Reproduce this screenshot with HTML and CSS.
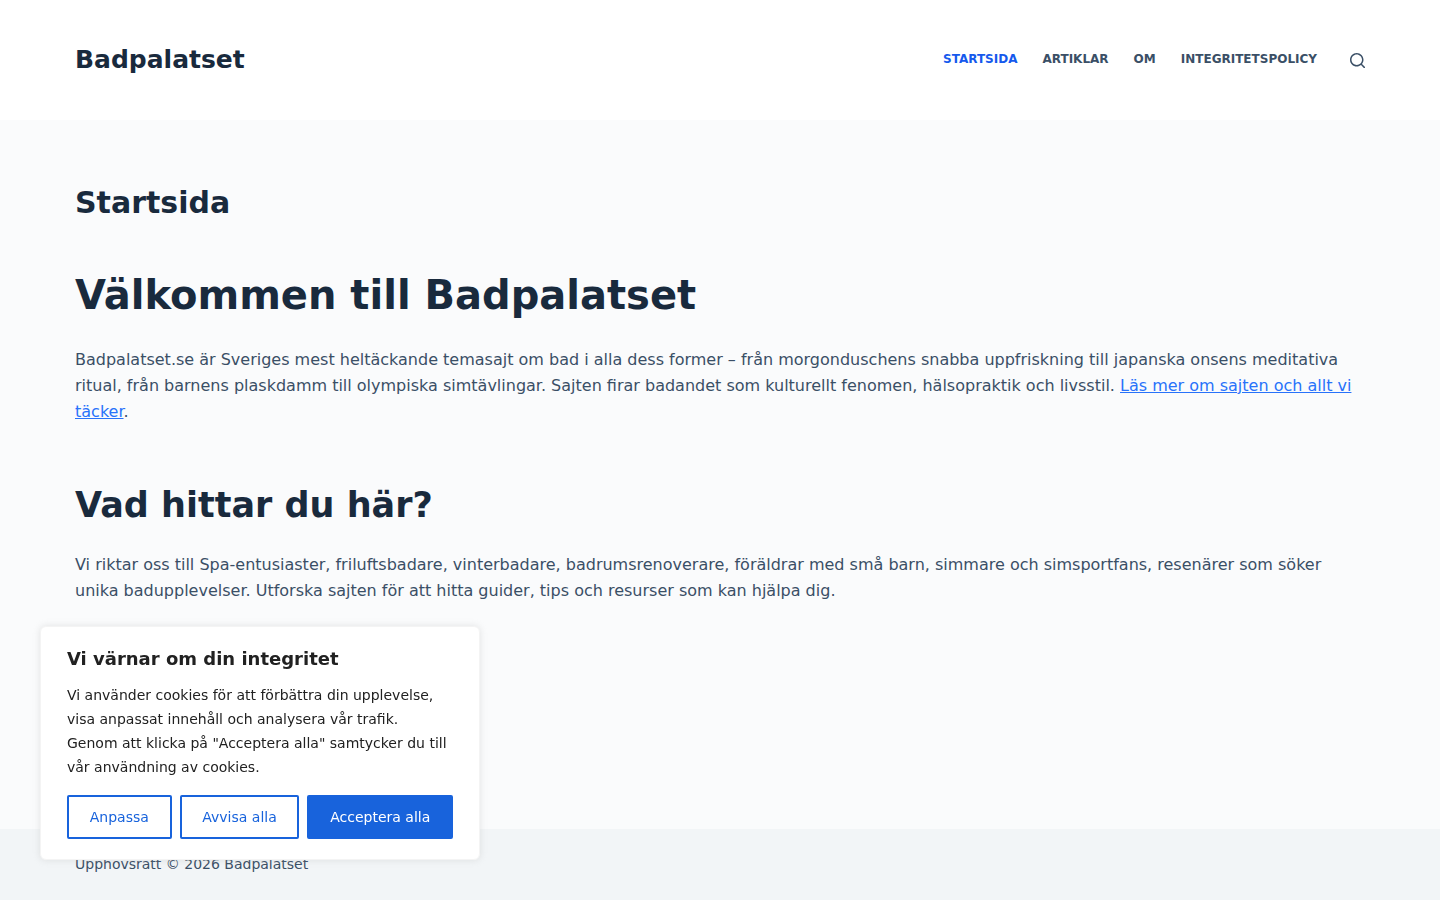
FILE: index.html
```html
<!DOCTYPE html>
<html lang="sv">
<head>
<meta charset="utf-8">
<meta name="viewport" content="width=device-width, initial-scale=1">
<title>Badpalatset</title>
<link rel="stylesheet" href="styles.css">
</head>
<body>
<header class="site-header">
  <div class="container header-row">
    <a class="site-title" href="#">Badpalatset</a>
    <div class="header-tools">
      <nav class="menu" aria-label="Huvudmeny">
        <a class="menu-link current" href="#" aria-current="page">Startsida</a>
        <a class="menu-link" href="#">Artiklar</a>
        <a class="menu-link" href="#">Om</a>
        <a class="menu-link" href="#">Integritetspolicy</a>
      </nav>
      <button class="search-toggle" type="button" aria-label="Sök">
        <svg width="15" height="15" viewBox="0 0 15 15" fill="currentColor" aria-hidden="true"><path d="M14.8,13.7L12,11c0.9-1.2,1.5-2.6,1.5-4.2c0-3.7-3-6.8-6.8-6.8S0,3,0,6.8s3,6.8,6.8,6.8c1.6,0,3.1-0.6,4.2-1.5l2.8,2.8c0.1,0.1,0.3,0.2,0.5,0.2s0.4-0.1,0.5-0.2C15.1,14.5,15.1,14,14.8,13.7z M1.5,6.8c0-2.9,2.4-5.2,5.2-5.2S12,3.9,12,6.8S9.6,12,6.8,12S1.5,9.6,1.5,6.8z"/></svg>
      </button>
    </div>
  </div>
</header>
<main class="content">
  <article class="container">
    <h1 class="page-title">Startsida</h1>
    <h1 class="welcome">Välkommen till Badpalatset</h1>
    <p class="text">Badpalatset.se är Sveriges mest heltäckande temasajt om bad i alla dess former – från morgonduschens snabba uppfriskning till japanska onsens meditativa ritual, från barnens plaskdamm till olympiska simtävlingar. Sajten firar badandet som kulturellt fenomen, hälsopraktik och livsstil. <a class="text-link" href="#">Läs mer om sajten och allt vi täcker</a>.</p>
    <h2 class="section-title">Vad hittar du här?</h2>
    <p class="text">Vi riktar oss till Spa-entusiaster, friluftsbadare, vinterbadare, badrumsrenoverare, föräldrar med små barn, simmare och simsportfans, resenärer som söker unika badupplevelser. Utforska sajten för att hitta guider, tips och resurser som kan hjälpa dig.</p>
  </article>
</main>
<footer class="site-footer">
  <div class="container copyright">Upphovsrätt © 2026 Badpalatset</div>
</footer>
<section class="consent" role="dialog" aria-labelledby="consent-title">
  <h2 class="consent-title" id="consent-title">Vi värnar om din integritet</h2>
  <p class="consent-text">Vi använder cookies för att förbättra din upplevelse, visa anpassat innehåll och analysera vår trafik. Genom att klicka på "Acceptera alla" samtycker du till vår användning av cookies.</p>
  <div class="consent-actions">
    <button class="consent-button" type="button">Anpassa</button>
    <button class="consent-button" type="button">Avvisa alla</button>
    <button class="consent-button primary" type="button">Acceptera alla</button>
  </div>
</section>
</body>
</html>
```
FILE: styles.css
```css
* {
  box-sizing: border-box;
}

body {
  display: flex;
  flex-direction: column;
  min-height: 100vh;
  margin: 0;
  background: #fafbfc;
  color: #3a4f66;
  font-family: "DejaVu Sans", sans-serif;
  font-size: 16px;
}

h1,
h2,
p {
  margin: 0;
}

.container {
  width: 100%;
  max-width: 1290px;
  margin: 0 auto;
}

.site-header,
.content,
.site-footer {
  padding: 0 24px;
}

.site-header {
  background: #fff;
}

.header-row {
  display: flex;
  align-items: center;
  justify-content: space-between;
  min-height: 120px;
}

.site-title {
  color: #192a3d;
  font-size: 25px;
  font-weight: 700;
  line-height: 38px;
  text-decoration: none;
}

.header-tools {
  display: flex;
  align-items: center;
  gap: 33px;
}

.menu {
  display: flex;
  gap: 25px;
}

.menu-link {
  padding-bottom: 2px;
  color: #3a4f66;
  font-size: 12px;
  font-weight: 700;
  line-height: 16px;
  text-decoration: none;
  text-transform: uppercase;
}

.menu-link.current {
  color: #1559ed;
}

.search-toggle {
  display: flex;
  padding: 0;
  border: 0;
  background: none;
  color: #3a4f66;
}

.content {
  flex: 1;
  padding-top: 60px;
  padding-bottom: 60px;
}

.page-title,
.welcome,
.section-title {
  color: #192a3d;
  font-weight: 700;
}

.page-title {
  margin-bottom: 40px;
  font-size: 30px;
  line-height: 45px;
}

.welcome {
  margin-bottom: 22px;
  font-size: 40px;
  line-height: 60px;
}

.text {
  line-height: 26px;
}

.text-link {
  color: #2872fa;
}

.section-title {
  margin: 54px 0 20px;
  font-size: 35px;
  line-height: 53px;
}

.site-footer {
  padding-top: 23px;
  padding-bottom: 24px;
  background: #f2f5f7;
}

.copyright {
  font-size: 14px;
  line-height: 24px;
}

.consent {
  position: fixed;
  bottom: 40px;
  left: 40px;
  width: 440px;
  padding: 20px 26px;
  border: 1px solid #f4f4f4;
  border-radius: 6px;
  background: #fff;
  box-shadow: 0 0 7px rgba(172, 171, 171, 0.3);
  color: #212121;
}

.consent-title {
  margin-bottom: 12px;
  font-size: 18px;
  line-height: 24px;
}

.consent-text {
  margin-bottom: 16px;
  font-size: 14px;
  line-height: 24px;
}

.consent-actions {
  display: flex;
  gap: 8px;
}

.consent-button {
  flex: 1 1 auto;
  min-height: 44px;
  padding: 8px 20px;
  border: 2px solid #1863dc;
  border-radius: 2px;
  background: #fff;
  color: #1863dc;
  font-family: inherit;
  font-size: 14px;
  line-height: 24px;
  white-space: nowrap;
}

.consent-button.primary {
  background: #1863dc;
  color: #fff;
}
```
